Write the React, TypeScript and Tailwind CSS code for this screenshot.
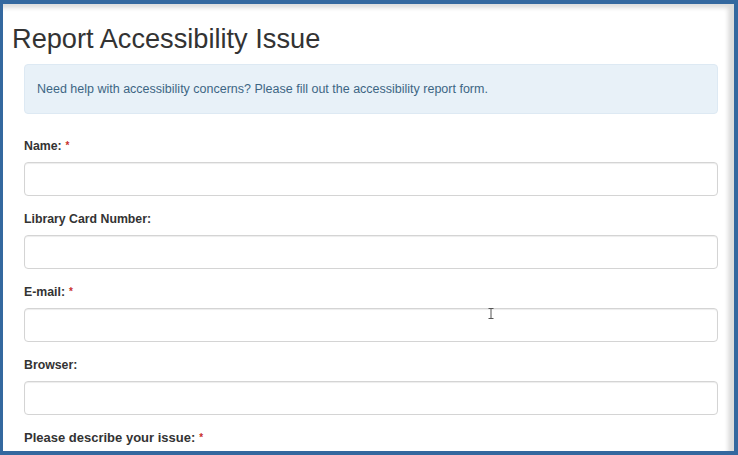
import React from 'react';

interface FieldProps {
  label: string;
  required?: boolean;
  cursor?: boolean;
}

function Field({ label, required, cursor }: FieldProps) {
  return (
    <div className="flex flex-col pb-[15px]">
      <label className="h-[16px] text-[12.3px] font-bold leading-[16px] text-[#333]">
        {label}
        {required && <span className="ml-[4px] text-[10px] font-bold text-[#c9302c] align-top">*</span>}
      </label>
      <div className="relative mt-[8px]">
        <input
          type="text"
          className="block h-[34px] w-full rounded-[4px] border border-[#d4d4d4] bg-white px-3 shadow-[inset_0_1px_1px_rgba(0,0,0,0.075)] outline-none"
        />
        {cursor && (
          <svg className="absolute left-[464px] top-[0px]" width="6" height="11" viewBox="0 0 6 11">
            <path d="M0.5 0.5h5M3 0.5v10M0.5 10.5h5" stroke="#555" strokeWidth="1" fill="none" />
          </svg>
        )}
      </div>
    </div>
  );
}

export default function App() {
  return (
    <div
      className="h-[455px] w-[738px] overflow-hidden border-b-[4px] border-l-[3px] border-r-[4px] border-t-[4px] border-[#34689f] bg-white shadow-[inset_-6px_4px_4px_rgba(0,0,0,0.14)]"
      style={{ fontFamily: '"Liberation Sans", Arial, sans-serif' }}
    >
      <div className="flex flex-col pl-[9px] pr-[16px] pt-[20px]">
        <h1 className="text-[27.2px] font-normal leading-[30px] text-[#333]">Report Accessibility Issue</h1>
        <div className="pl-[12px]">
          <div className="mt-[10px] flex h-[50px] items-center rounded-[4px] border border-[#dde9f3] bg-[#e8f1f8] px-[12px] text-[12.5px] text-[#3d6684]">
            Need help with accessibility concerns? Please fill out the accessibility report form.
          </div>
          <div className="mt-[24px] flex flex-col">
            <Field label="Name:" required />
            <Field label="Library Card Number:" />
            <Field label="E-mail:" required cursor />
            <Field label="Browser:" />
            <label className="h-[16px] text-[13px] font-bold leading-[16px] text-[#333]">
              Please describe your issue:
              <span className="ml-[4px] text-[10px] font-bold text-[#c9302c] align-top">*</span>
            </label>
          </div>
        </div>
      </div>
    </div>
  );
}
